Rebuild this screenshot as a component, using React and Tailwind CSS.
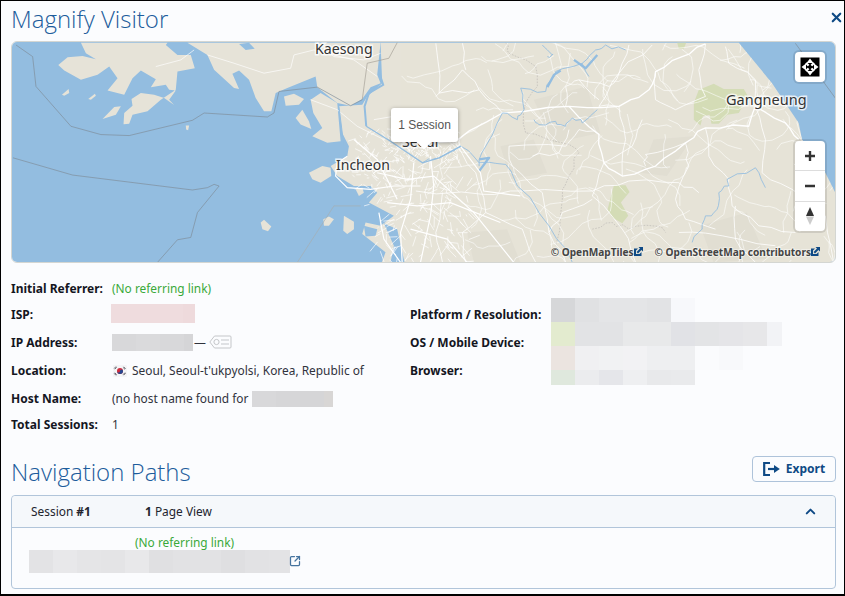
import React from "react";
import { X, ChevronUp, SquareArrowOutUpRight } from "lucide-react";

const poly = (p) => p.map((v) => v.join(",")).join(" ");

function rng(seed) {
  let s = seed;
  return () => {
    s = (s * 16807) % 2147483647;
    return s / 2147483647;
  };
}

const MAIN_LAND =
  "M1140,128 L2216,128 L2316,250 L2396,370 L2406,420 L2476,520 L2506,580 L2535,600 L2535,800 L1140,800 L1155,760 L1085,705 L1095,670 L1140,680 L1180,650 L1105,610 L1130,580 L1110,560 L1060,560 L1010,530 L990,500 L1040,470 L1045,440 L1025,400 L1015,320 L1085,315 L1100,290 L1145,250 Z";

const LAND = [
  "M240,128 L255,160 L285,178 L245,168 L200,172 L172,195 L190,212 L240,240 L290,225 L325,200 L350,235 L320,272 L370,285 L395,235 L420,212 L465,238 L450,262 L495,255 L505,270 L525,272 L505,300 L520,316 L490,295 L460,285 L420,280 L392,298 L395,318 L370,340 L368,374 L385,372 L395,345 L440,335 L480,300 L525,270 L530,215 L582,205 L570,165 L530,165 L495,135 L500,128 Z",
  "M560,128 L620,165 L640,210 L700,265 L715,268 L695,222 L715,212 L745,240 L765,295 L790,335 L812,335 L825,280 L860,265 L945,230 L950,262 L1010,310 L1050,318 L1085,298 L1110,262 L1140,250 L1130,225 L1140,128 Z",
  MAIN_LAND,
  "M930,300 L960,280 L1010,310 L1020,425 L980,430 L935,410 L965,385 L938,340 Z",
  "M850,290 L880,282 L910,298 L895,315 L855,318 Z",
  "M885,355 L905,330 L925,365 L932,388 L900,375 Z",
  "M305,358 L340,322 L360,320 L345,345 Z",
  "M262,298 L282,282 L285,288 L270,300 Z",
  "M183,285 L203,268 L205,280 L190,288 Z",
  "M555,378 L565,378 L562,392 L556,390 Z",
  "M780,670 L790,662 L812,682 L802,696 L785,690 Z",
  "M968,660 L985,652 L1000,660 L985,680 L970,680 Z",
  "M1030,650 L1060,668 L1060,690 L1040,705 L1028,695 Z",
  "M925,520 L965,500 L990,505 L992,530 L960,550 L935,540 Z",
  "M1065,570 L1085,565 L1090,580 L1075,590 Z",
];

const WATER = [
  "M715,132 L745,128 L762,146 L735,150 Z",
  "M1150,672 L1190,690 L1212,790 L1170,790 L1180,740 Z",
  "M1090,680 L1130,690 L1125,710 L1095,712 Z",
];

const ROADS_R = [
  [[-60,430],[100,425],[240,340],[440,320],[590,320],[680,270],[700,215],[780,170],[850,132]],
  [[440,320],[530,405],[545,490],[600,530],[700,500],[790,430],[850,385],[980,380],[1000,320],[1090,370],[1130,420]],
  [[545,490],[510,590],[600,690],[640,790]],
  [[-20,575],[180,585],[300,575],[510,575],[620,545],[770,550],[830,580]],
  [[100,430],[160,520],[190,640],[300,690],[340,790]],
  [[240,340],[170,270],[120,210],[40,290]],
  [[430,320],[430,260],[470,240],[530,300]],
  [[590,320],[530,320],[590,220],[620,135]],
  [[660,360],[630,440],[545,490]],
  [[700,215],[700,300],[760,330],[850,290],[830,210],[850,132]],
  [[850,385],[860,470],[920,540],[930,620],[1010,680],[1120,700]],
  [[790,430],[670,465],[670,500]],
  [[790,430],[800,500],[760,600],[790,660],[880,690]],
  [[1000,320],[1030,420],[1020,520],[1110,570],[1210,650],[1235,790]],
  [[940,620],[940,720],[1000,790]],
  [[430,440],[260,440],[270,500],[360,580],[380,700],[430,790]],
  [[430,440],[470,390],[530,405]],
  [[470,240],[560,260],[590,220],[690,135]],
  [[770,700],[900,710],[1060,740]],
  [[600,530],[610,420],[590,320]],
  [[330,470],[410,460],[440,390]],
  [[40,130],[50,280],[170,270]],
  [[120,130],[130,210]],
  [[910,140],[920,190],[1000,240],[1000,320]],
  [[510,600],[420,640],[380,700]],
  [[60,580],[40,700],[60,790]],
  [[190,640],[120,700],[130,790]],
];

const RIVERS_R = [
  [[0,490],[50,475],[115,440],[170,490],[250,495],[285,560],[380,680],[450,790]],
  [[170,500],[190,440],[240,340],[285,360],[305,330],[295,265],[370,275],[400,215],[480,190],[520,150],[550,135],[610,150]],
  [[335,360],[350,375],[400,365],[430,380],[450,355],[480,370],[525,330]],
  [[810,730],[840,690],[850,650],[885,630],[890,580],[920,560],[915,540],[1000,505],[1030,565]],
  [[360,135],[390,165],[375,170]],
  [[480,190],[500,230]],
];

const jr = rng(98765);
function wiggle(points, amp = 5) {
  const out = [];
  points.forEach((p, i) => {
    if (i > 0) {
      const a = points[i - 1];
      const n = 3;
      for (let k = 1; k < n; k++) {
        out.push([
          a[0] + ((p[0] - a[0]) * k) / n + (jr() - 0.5) * amp * 2,
          a[1] + ((p[1] - a[1]) * k) / n + (jr() - 0.5) * amp * 2,
        ]);
      }
    }
    out.push(p);
  });
  return out;
}

const r = rng(4242);
const CITY = Array.from({ length: 380 }, () => {
  const cluster = r();
  let x, y, w;
  if (cluster < 0.45) {
    x = 1150 + r() * 230;
    y = 400 + r() * 90;
    w = 16;
  } else if (cluster < 0.6) {
    x = 1060 + r() * 130;
    y = 390 + r() * 230;
    w = 22;
  } else {
    x = 1130 + r() * 280;
    y = 480 + r() * 310;
    w = 36;
  }
  return [[x, y], [x + (r() - 0.5) * w * 2, y + (r() - 0.5) * w * 2]];
});

const w2 = rng(1357);
const WALKS = Array.from({ length: 120 }, () => {
  let x = 1400 + w2() * 1130;
  let y = 130 + w2() * 660;
  let a = w2() * Math.PI * 2;
  const pts = [[x, y]];
  const n = 5 + Math.floor(w2() * 7);
  for (let i = 0; i < n; i++) {
    a += (w2() - 0.5) * 1.5;
    const l = 12 + w2() * 26;
    x += Math.cos(a) * l;
    y += Math.sin(a) * l;
    pts.push([Math.round(x), Math.round(y)]);
  }
  return pts;
});

const SEOUL_ARTERIES = [
  "1040,470 1010,490 1005,530 1040,565 1110,570 1180,560 1260,560",
  "1135,640 1150,720 1200,790",
  "1240,490 1230,600 1200,700 1205,790",
  "1290,470 1300,560 1290,650 1260,790",
  "1130,520 1220,540 1300,530 1420,640 1540,790",
  "1160,610 1250,620 1350,610 1500,670",
  "1380,440 1440,520 1450,575 1560,590",
  "1230,690 1340,720 1400,790",
  "1060,420 1130,480 1190,600",
];

function MapSvg() {
  return (
    <svg viewBox="11 42 824 221" className="block w-full h-full" preserveAspectRatio="none">
      <defs>
        <clipPath id="mainland">
          <path d={MAIN_LAND} />
        </clipPath>
      </defs>
      <rect x="0" y="0" width="845" height="300" fill="#93bde0" />
      <g transform="scale(0.33333)">
        {LAND.map((d, i) => (
          <path key={i} d={d} fill="#e6e3d8" />
        ))}
        {WATER.map((d, i) => (
          <path key={i} d={d} fill="#93bde0" />
        ))}
        <g fill="#e1ded2">
          <path d="M1500,440 L1600,420 L1640,520 L1530,540 Z" />
          <path d="M1600,300 L1760,260 L1800,400 L1660,430 Z" />
          <path d="M1960,420 L2080,410 L2000,530 L1920,520 Z" />
          <path d="M1400,700 L1520,690 L1560,790 L1420,790 Z" />
          <path d="M2100,680 L2240,640 L2300,780 L2140,790 Z" />
        </g>
        <g transform="translate(1266 0)">
          <path d="M815,310 L830,270 L875,252 L905,268 L965,268 L978,290 L950,340 L915,345 L890,372 L868,372 L862,345 L842,350 L835,378 L815,360 Z" fill="#d4dcb6" />
          <path d="M765,128 L792,128 L785,146 L770,146 Z" fill="#d4dcb6" />
          <path d="M575,558 L610,558 L622,578 L596,610 L618,650 L600,672 L570,655 L556,630 Z" fill="#d4dcb6" />
          <g fill="none" stroke="#bdbab4" strokeWidth="2" strokeDasharray="5 4">
            <polyline points={poly(wiggle([[250,130],[260,160],[340,200],[345,260],[310,310],[310,400],[420,430],[470,460],[440,530],[420,600],[400,740]], 8))} />
            <polyline points={poly(wiggle([[510,690],[570,670],[620,690],[690,680],[730,700]], 8))} />
          </g>
        </g>
        <g clipPath="url(#mainland)" fill="none" stroke="#ffffff" strokeWidth="1.9" strokeLinejoin="round" opacity="0.9">
          {WALKS.map((p, i) => (
            <polyline key={i} points={poly(p)} />
          ))}
        </g>
        <g transform="translate(1266 0)">
          <g fill="none" stroke="#ffffff" strokeLinejoin="round">
            {ROADS_R.map((p, i) => (
              <polyline key={i} points={poly(wiggle(p, 6))} strokeWidth={i < 2 ? 4 : 2.4} />
            ))}
          </g>
          <g fill="none" stroke="#93bde0" strokeWidth="2.6" strokeLinejoin="round">
            {RIVERS_R.map((p, i) => (
              <polyline key={i} points={poly(wiggle(p, 7))} />
            ))}
            <polyline points="170,480 200,475 170,515" strokeWidth="7" />
            <polyline points="375,262 395,225 415,212" strokeWidth="7" />
            <polyline points="455,180 490,205 525,165" strokeWidth="7" />
          </g>
        </g>
        <g fill="none" stroke="#ffffff" strokeWidth="2">
          {CITY.map((p, i) => (
            <polyline key={i} points={poly(p)} />
          ))}
          {SEOUL_ARTERIES.map((p, i) => (
            <polyline key={i} strokeWidth="3.6" points={p} />
          ))}
          <polyline points="930,300 1010,330 1070,380 1150,420" />
          <polyline points="620,165 700,190 790,220 870,205 880,165 940,150 1060,180 1130,230" />
          <polyline points="465,200 540,180 580,150" />
          <polyline points="1120,360 1180,350 1230,330" />
          <polyline points="950,128 1000,170 1090,180 1140,160" />
        </g>
        <g fill="none" stroke="#93bde0">
          <polyline strokeWidth="6" points="1138,225 1148,255 1105,280 1092,320 1097,380" />
          <polyline strokeWidth="4" points="1097,380 1170,425 1266,490 1316,475 1381,440" />
          <polyline strokeWidth="3" points="1015,320 1030,440" />
        </g>
        <g fill="none" stroke="#7f8c99" strokeWidth="2">
          <polyline points="45,135 95,170 105,260 210,380 300,405 385,408 575,362 610,340 800,352 820,340 835,275 950,262 1050,318 1085,300" />
          <polyline stroke="#a39f96" points="1085,300 1100,190 1165,175 1190,128" />
          <polyline points="36,475 215,527 575,572 620,565 640,555 655,560 590,640 570,715 530,722 470,790" />
          <polyline points="2386,130 2506,295" />
          <polyline stroke="#a6aeb1" points="890,790 1000,620 1080,620" />
        </g>
      </g>
    </svg>
  );
}

function MapLabel({ children, className }) {
  return (
    <span
      className={`absolute leading-none text-[#333] [font-family:'Noto_Sans',sans-serif] [paint-order:stroke_fill] [-webkit-text-stroke:3px_rgba(255,255,255,0.75)] ${className}`}
    >
      {children}
    </span>
  );
}

function AttrIcon() {
  return (
    <svg width="9" height="9" viewBox="0 0 9 9" className="shrink-0">
      <path d="M0 1.5 H4 L2 3.5 V7 H5.5 L7.5 5 V9 H0 Z" fill="#0f4a85" />
      <path d="M4.5 0 H9 V4.5 L7.4 3 L4 6.4 L2.6 5 L6 1.6 Z" fill="#0f4a85" />
    </svg>
  );
}

function Mosaic({ colors, widths, className = "" }) {
  return (
    <div className={`flex ${className}`}>
      {colors.map((c, i) => (
        <div key={i} className="h-full" style={{ background: c, width: widths && widths[i] ? widths[i] : 24 }} />
      ))}
    </div>
  );
}

function Row({ label, h, children }) {
  return (
    <div className={`flex items-center ${h}`}>
      <div className="w-[101px] shrink-0 font-bold text-[12px] text-[#14161f]">{label}</div>
      <div className="flex items-center min-w-0 text-[#30323c]">{children}</div>
    </div>
  );
}

function KoreaFlag() {
  return (
    <svg width="14" height="12" viewBox="0 0 14 12" className="shrink-0">
      <rect width="14" height="12" rx="1" fill="#f4f4f6" />
      <circle cx="7" cy="6" r="3" fill="#cf2b3c" />
      <path d="M4 6 a3 3 0 0 0 6 0 a1.5 1.5 0 0 0 -3 0 a1.5 1.5 0 0 1 -3 0Z" fill="#24468f" />
      <path d="M1.2 3.5 L3 1.5 M1.8 4.2 L3.6 2.2 M10.6 1.8 L12.6 3.8 M10.2 2.6 L12 4.4 M1.2 8.4 L3 10.4 M1.8 7.8 L3.6 9.8 M10.6 10.2 L12.6 8.2 M10.2 9.6 L12 7.6" stroke="#30323c" strokeWidth="0.7" />
    </svg>
  );
}

function TagIcon() {
  return (
    <svg width="23" height="14" viewBox="0 0 23 14" fill="none" className="ml-[3px] shrink-0">
      <path d="M5.5 1 H21 a1 1 0 0 1 1 1 V12 a1 1 0 0 1 -1 1 H5.5 L0.8 7 Z" stroke="#c4c6c9" strokeWidth="1" />
      <circle cx="7.5" cy="7" r="2.6" stroke="#c4c6c9" strokeWidth="1" />
      <path d="M12 5 H20 M12 9 H20" stroke="#c4c6c9" strokeWidth="1.2" />
    </svg>
  );
}

export default function App() {
  return (
    <div className="w-[845px] h-[596px] border border-black border-b-2 bg-[#fbfcfe] px-[10px] overflow-hidden text-[11.9px] [font-family:'Noto_Sans',sans-serif]">
      <div className="flex items-center justify-between h-[40px]">
        <h1 className="text-[24px] leading-none font-light text-[#1d5c9c] [font-family:'Open_Sans',sans-serif] mt-[-4px]">Magnify Visitor</h1>
        <X size={15} strokeWidth={3.4} className="text-[#0f4a85] mr-[-10px] mt-[-8px]" />
      </div>

      <div className="relative h-[222px] w-[825px] rounded-[6px] overflow-hidden border border-[#d4d6d2]">
        <MapSvg />
        <MapLabel className="left-[303px] top-0 text-[14.2px]">Kaesong</MapLabel>
        <MapLabel className="left-[324px] top-[116px] text-[14px]">Incheon</MapLabel>
        <MapLabel className="left-[714px] top-[50px] text-[14.5px]">Gangneung</MapLabel>
        <MapLabel className="left-[390px] top-[93px] text-[14px]">Seoul</MapLabel>

        <div className="absolute left-[379px] top-[66px] w-[67px] h-[34px] bg-white rounded-[3px] shadow-[0_1px_4px_rgba(0,0,0,0.35)] flex items-center justify-center text-[12px] text-[#555] [font-family:'Liberation_Sans',sans-serif]">
          <div className="absolute left-[27px] top-[27px] w-[12px] h-[12px] rotate-45 bg-white" />
          <span className="relative">1 Session</span>
        </div>

        <div className="absolute left-[783px] top-[10px] w-[30px] h-[30px] bg-white rounded-[4px] shadow-[0_0_0_2px_rgba(0,0,0,0.1)] flex items-center justify-center">
          <svg width="20" height="20" viewBox="0 0 20 20">
            <rect x="0.5" y="0.5" width="19" height="19" fill="#000" />
            <path d="M10 1.5 L13.5 6 H6.5 Z M10 18.5 L13.5 14 H6.5 Z M1.5 10 L6 6.5 V13.5 Z M18.5 10 L14 6.5 V13.5 Z" fill="#fff" />
            <path d="M6 6 L14 14 M14 6 L6 14" stroke="#fff" strokeWidth="2.4" />
            <path d="M10 7.2 L12.8 10 L10 12.8 L7.2 10 Z" fill="#000" />
          </svg>
        </div>

        <div className="absolute left-[783px] top-[99px] w-[30px] h-[90px] bg-white rounded-[4px] shadow-[0_0_0_2px_rgba(0,0,0,0.1)] flex flex-col divide-y divide-[#ddd]">
          <div className="flex-1 flex items-center justify-center">
            <svg width="12" height="12" viewBox="0 0 12 12"><path d="M6 1 V11 M1 6 H11" stroke="#333" strokeWidth="2.4" /></svg>
          </div>
          <div className="flex-1 flex items-center justify-center">
            <svg width="12" height="12" viewBox="0 0 12 12"><path d="M1 6 H11" stroke="#333" strokeWidth="2.4" /></svg>
          </div>
          <div className="flex-1 flex items-center justify-center">
            <svg width="10" height="20" viewBox="0 0 10 20">
              <path d="M5 1 L9 10 H1 Z" fill="#333" />
              <path d="M5 19 L9 10.5 H1 Z" fill="#ccc" />
            </svg>
          </div>
        </div>

        <div className="absolute right-[15px] bottom-[5px] flex items-center text-[10.1px] font-bold leading-none text-[#444] [paint-order:stroke_fill] [-webkit-text-stroke:2px_rgba(255,255,255,0.45)]">
          <span>© OpenMapTiles</span>
          <AttrIcon />
          <span className="ml-[12px]">© OpenStreetMap contributors</span>
          <AttrIcon />
        </div>
      </div>

      <div className="flex mt-[13px] h-[183px]">
        <div className="w-[399px] shrink-0">
          <Row label="Initial Referrer:" h="h-[26px]">
            <span className="text-[#3aa93a]">(No referring link)</span>
          </Row>
          <Row label="ISP:" h="h-[26px]">
            <Mosaic className="h-[19px] mt-[-3px] ml-[-1px]" colors={["#efdcde", "#efdcde", "#efdcde", "#eedadc"]} widths={[24, 24, 24, 12]} />
          </Row>
          <Row label="IP Address:" h="h-[29px]">
            <Mosaic className="h-[17px]" colors={["#d8d8da", "#dadadc", "#d8d8da", "#d5d5d7"]} widths={[24, 24, 24, 9]} />
            <span className="ml-px">—</span>
            <TagIcon />
          </Row>
          <Row label="Location:" h="h-[28px]">
            <span className="ml-px"><KoreaFlag /></span>
            <span className="ml-[5px]">Seoul, Seoul-t'ukpyolsi, Korea, Republic of</span>
          </Row>
          <Row label="Host Name:" h="h-[28px]">
            <span>(no host name found for </span>
            <Mosaic className="h-[16px] ml-[4px]" colors={["#d8d8da", "#d6d6d8", "#d5d5d7", "#d8d6d5"]} widths={[24, 24, 24, 9]} />
          </Row>
          <Row label="Total Sessions:" h="h-[23px]">
            <span>1</span>
          </Row>
        </div>
        <div className="flex flex-1 mt-[22px] h-[87px]">
          <div className="w-[141px] shrink-0 font-bold text-[12px] text-[#14161f]">
            <div className="h-[28px] flex items-center mt-[3px]">Platform / Resolution:</div>
            <div className="h-[28px] flex items-center">OS / Mobile Device:</div>
            <div className="h-[28px] flex items-center">Browser:</div>
          </div>
          <div>
            <Mosaic className="h-6" colors={["#d6d7d9", "#e0e1e3", "#e4e5e7", "#e4e5e7", "#e2e3e5", "#f7f8fb"]} />
            <Mosaic className="h-6" colors={["#e3ebcf", "#e2e3e5", "#e2e3e5", "#e8e9ea", "#e8e9ea", "#e1e2e6", "#e3e4e6", "#e5e5e8", "#e7e7e9", "#f2f3f6"]} widths={[24, 24, 24, 24, 24, 24, 24, 24, 24, 15]} />
            <Mosaic className="h-6" colors={["#ebe4e0", "#f0f0f2", "#f1f2f3", "#f2f2f4", "#eeeff1", "#eeeff1", "#fafbfd", "#f8f9fb"]} />
            <Mosaic className="h-[15px]" colors={["#dfe8dd", "#ebecee", "#e5e6ea", "#eeeff1", "#e8e9eb", "#e9eaec"]} />
          </div>
        </div>
      </div>

      <div className="flex items-center justify-between h-[30px] mt-[-3px]">
        <h2 className="text-[24px] leading-none font-light text-[#1d5c9c] [font-family:'Open_Sans',sans-serif] mt-[2px]">Navigation Paths</h2>
        <button className="w-[84px] h-[26px] border border-[#aec3da] rounded-[4px] flex items-center justify-center gap-[6px] text-[12px] font-bold text-[#0f4a85] mr-[-2px] mt-[-4px]">
          <svg width="17" height="14" viewBox="0 0 17 14" fill="none">
            <path d="M7 1 H1.2 V13 H7" stroke="#0f4a85" strokeWidth="2.2" />
            <path d="M5 7 H12" stroke="#0f4a85" strokeWidth="2.2" />
            <path d="M11 3 L16.8 7 L11 11 Z" fill="#0f4a85" />
          </svg>
          Export
        </button>
      </div>

      <div className="mt-[9px] w-[825px] h-[94px] border border-[#b1c5da] rounded-[4px]">
        <div className="h-[32px] flex items-center bg-[#f5f8fb] border-b border-[#b1c5da] rounded-t-[4px] pl-[19px] pr-[17px] text-[#22242e]">
          <div className="w-[114px]">Session <b>#1</b></div>
          <div><b>1</b> Page View</div>
          <ChevronUp size={15} strokeWidth={3.2} className="text-[#0f4a85] ml-auto" />
        </div>
        <div className="pl-[17px] pt-[6px]">
          <div className="pl-[106px] leading-[16px] text-[#3aa93a]">(No referring link)</div>
          <div className="flex items-center h-[23px]">
            <Mosaic className="h-[23px]" colors={["#e3e3e5", "#e8e8ea", "#e5e5e7", "#e4e4e6", "#e8e8ea", "#e0e0e2", "#e2e2e4", "#e2e2e4", "#dfdfe1", "#e2e2e4", "#e3e3e5"]} widths={[24, 24, 24, 24, 24, 24, 24, 24, 24, 24, 21]} />
            <SquareArrowOutUpRight size={12} strokeWidth={2.5} className="text-[#46749f] ml-[-1px] mt-[-2px]" />
          </div>
        </div>
      </div>
    </div>
  );
}
